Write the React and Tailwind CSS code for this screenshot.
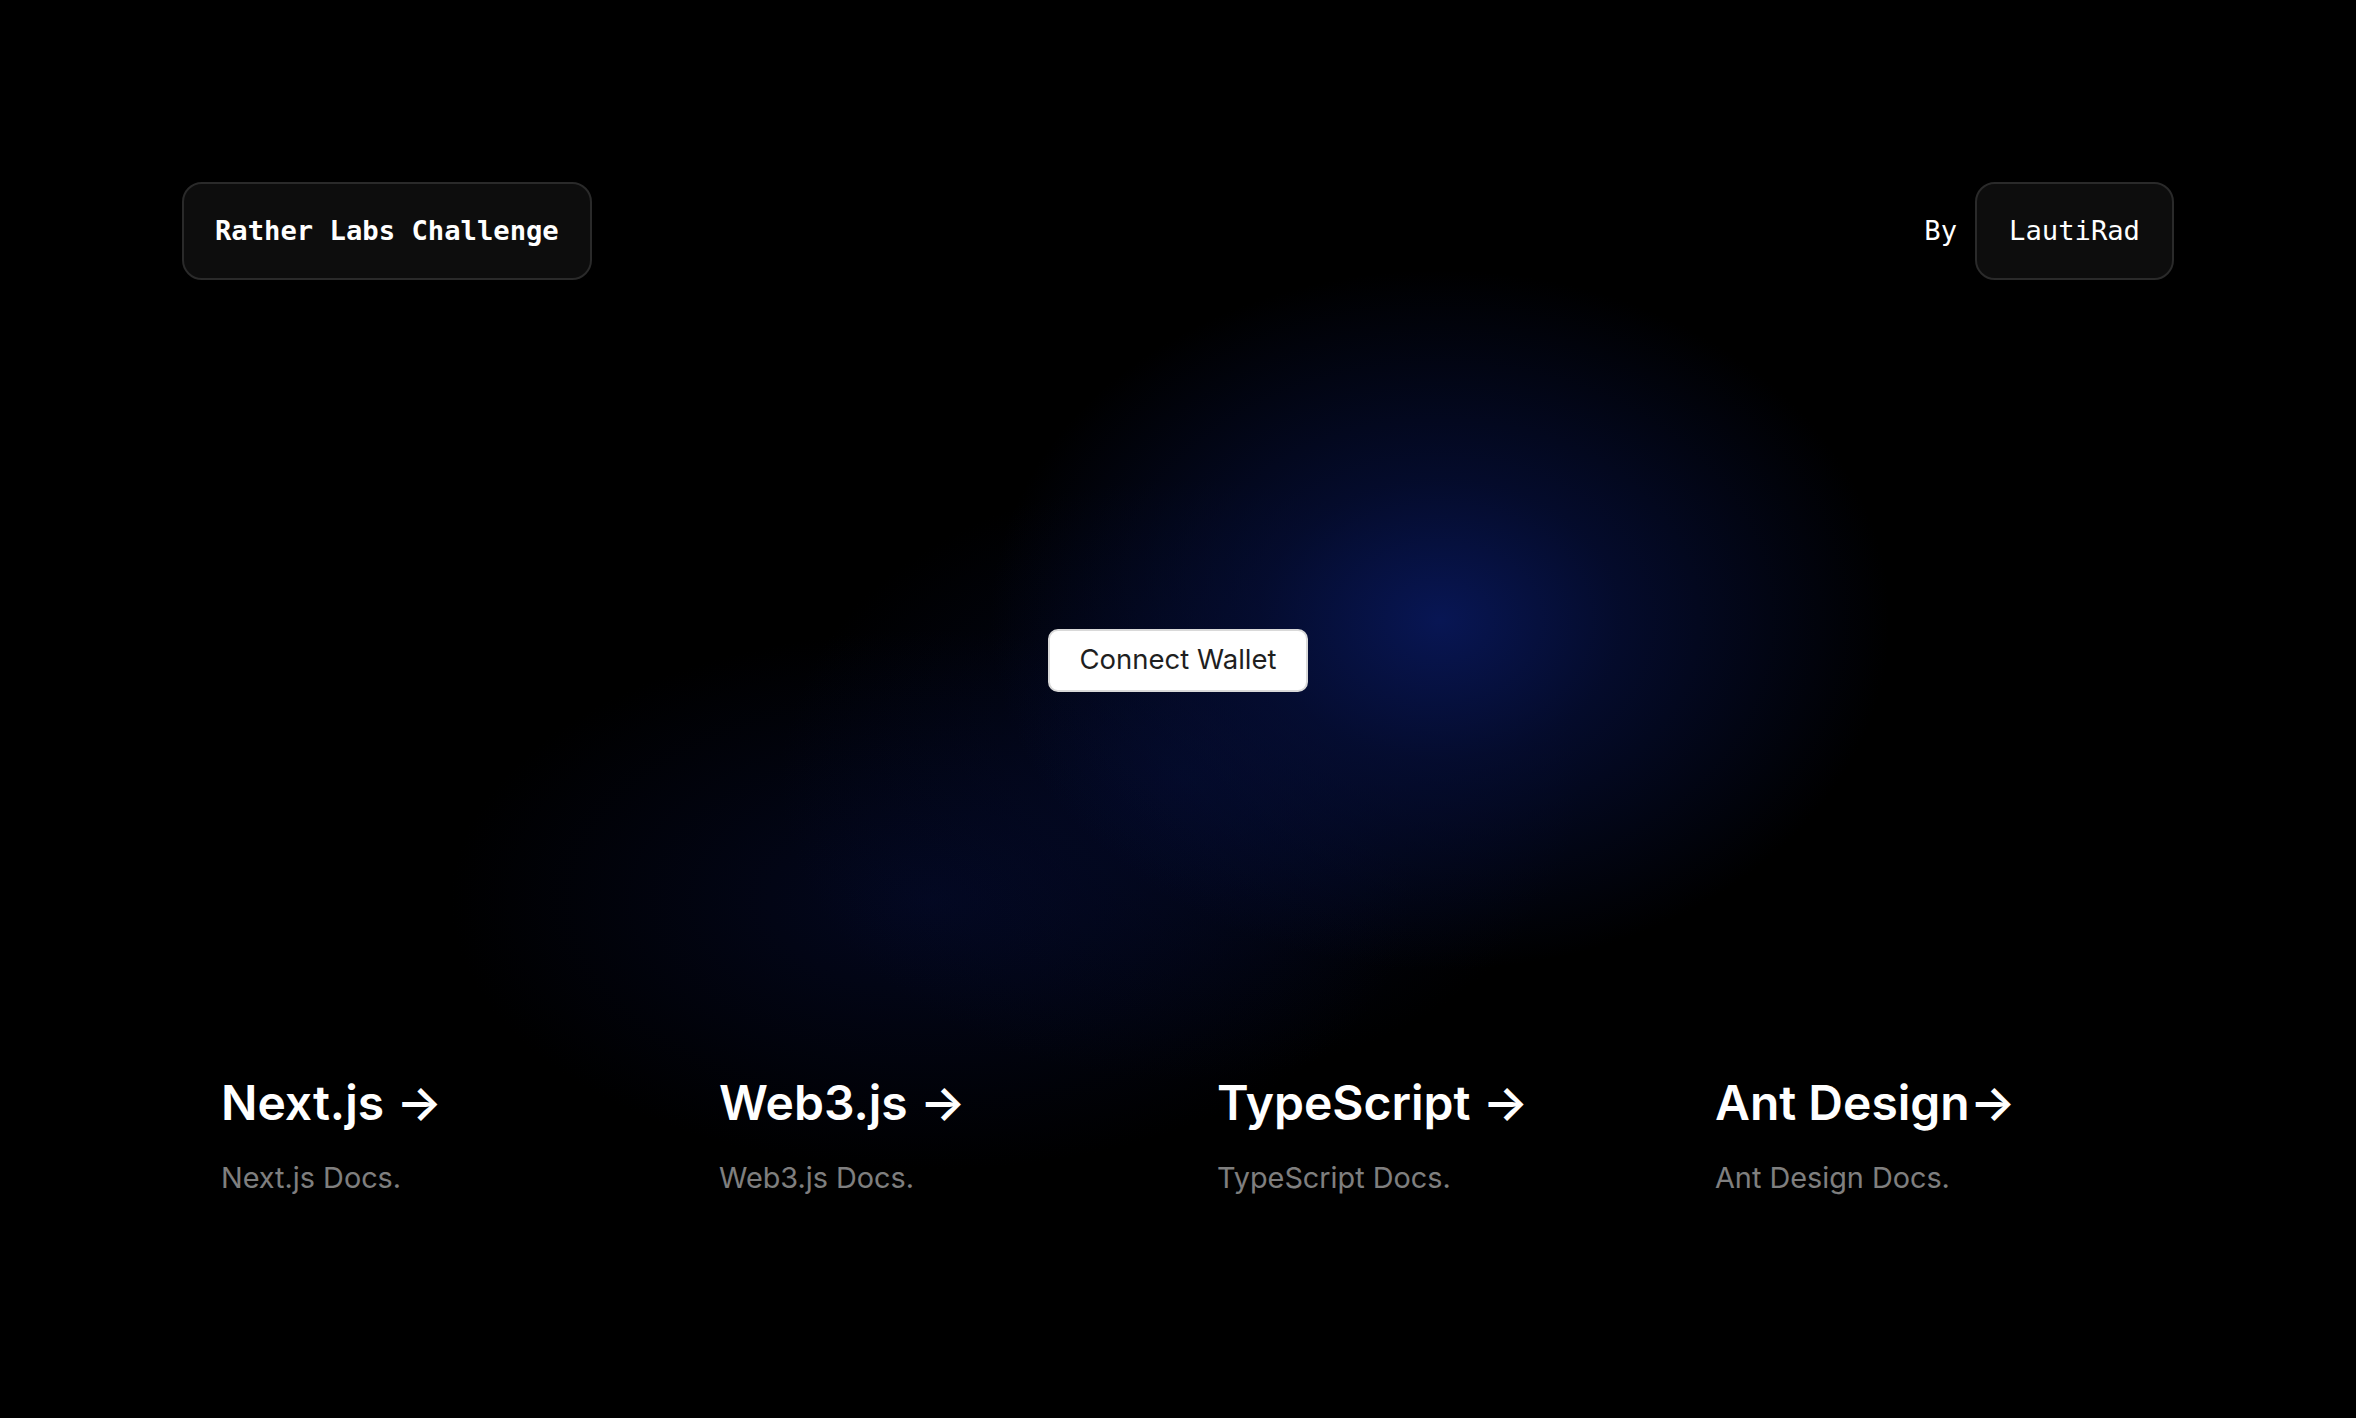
export default function App() {
  const cards = [
    { t: "Next.js", sp: true, d: "Next.js Docs." },
    { t: "Web3.js", sp: true, d: "Web3.js Docs." },
    { t: "TypeScript", sp: true, d: "TypeScript Docs." },
    { t: "Ant Design", sp: false, d: "Ant Design Docs." },
  ];
  return (
    <main
      className="flex h-[1418px] w-full flex-col items-center justify-between bg-black px-[182px] pt-[182px] pb-[190px] text-white bg-[radial-gradient(ellipse_450px_350px_at_1440px_620px,rgba(8,22,84,1)_0%,rgba(6,16,62,0.7)_40%,rgba(0,0,0,0)_100%),radial-gradient(ellipse_400px_300px_at_1180px_780px,rgba(4,12,50,0.6)_0%,rgba(0,0,0,0)_100%),radial-gradient(ellipse_480px_270px_at_930px_900px,rgba(4,10,42,0.75)_0%,rgba(0,0,0,0)_100%)]"
      style={{ fontFamily: "Inter, 'Noto Sans', sans-serif" }}
    >
      <div className="flex w-full items-center justify-between" style={{ fontFamily: "'DejaVu Sans Mono', monospace" }}>
        <div className="flex h-[98px] items-center rounded-[20px] border-2 border-[#2a2a2a] bg-[#0d0d0d] px-[31px] text-[27.2px] font-bold">
          Rather Labs Challenge
        </div>
        <div className="flex items-center gap-[18px] text-[27.2px]">
          <span>By</span>
          <div className="flex h-[98px] items-center rounded-[20px] border-2 border-[#2a2a2a] bg-[#0d0d0d] px-[32px]">
            LautiRad
          </div>
        </div>
      </div>

      <button className="flex h-[63px] w-[260px] items-center justify-center rounded-[10px] border-2 border-[#d9d9d9] bg-white text-[27.5px] text-[#1f1f1f]">
        Connect Wallet
      </button>

      <div className="grid w-full grid-cols-4">
        {cards.map((c) => (
          <div key={c.t} className="px-[39px] py-[31px]">
            <h2 className="mb-[23px] text-[48px] leading-[64px] font-semibold">
              {c.t}
              {c.sp ? " " : ""}
              <span className="inline-block">→</span>
            </h2>
            <p className="text-[28.8px] leading-[39px] text-white/50">{c.d}</p>
          </div>
        ))}
      </div>
    </main>
  );
}
